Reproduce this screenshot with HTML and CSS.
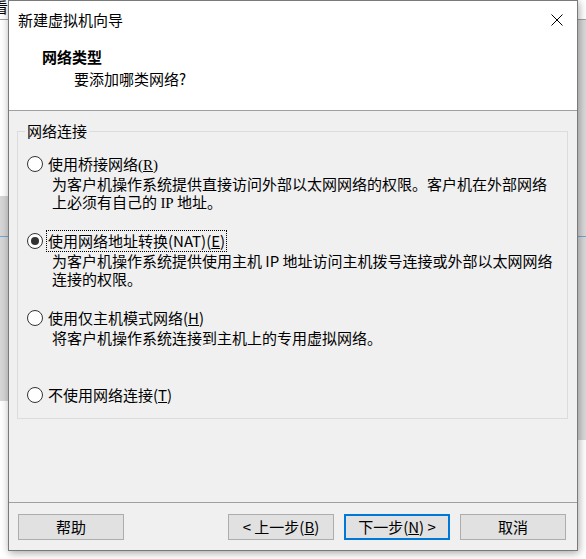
FILE: index.html
```html
<!DOCTYPE html>
<html lang="zh-CN">
<head>
<meta charset="utf-8">
<title>新建虚拟机向导</title>
<link rel="stylesheet" href="styles.css">
</head>
<body>
<div class="desktop">
  <div class="backdrop">
    <span class="bg-char">看</span>
    <div class="bg-line bg-line-top"></div>
    <div class="bg-band-left"></div>
    <div class="bg-band-right"></div>
    <div class="bg-blue"></div>
  </div>

  <div class="dialog">
    <div class="titlebar">
      <span class="title">新建虚拟机向导</span>
      <svg class="close" width="12" height="12" viewBox="0 0 12 12" aria-hidden="true">
        <path d="M0.5 0.5 L11.5 11.5 M11.5 0.5 L0.5 11.5" stroke="#000" stroke-width="1" fill="none"/>
      </svg>
    </div>

    <div class="header">
      <div class="h-title">网络类型</div>
      <div class="h-sub">要添加哪类网络?</div>
    </div>

    <div class="body">
      <fieldset class="group">
        <legend class="group-label">网络连接</legend>

        <div class="option">
          <div class="opt-row"><span class="radio"></span><span class="opt-label">使用桥接网络<span class="serif">(<u>R</u>)</span></span></div>
          <div class="opt-desc">为客户机操作系统提供直接访问外部以太网网络的权限。客户机在外部网络<br>上必须有自己的 <span class="serif">IP</span> 地址。</div>
        </div>

        <div class="option">
          <div class="opt-row"><span class="radio checked"></span><span class="opt-label focused">使用网络地址转换(NAT)(<u>E</u>)</span></div>
          <div class="opt-desc">为客户机操作系统提供使用主机 IP 地址访问主机拨号连接或外部以太网网络<br>连接的权限。</div>
        </div>

        <div class="option">
          <div class="opt-row"><span class="radio"></span><span class="opt-label">使用仅主机模式网络(<u>H</u>)</span></div>
          <div class="opt-desc">将客户机操作系统连接到主机上的专用虚拟网络。</div>
        </div>

        <div class="option">
          <div class="opt-row"><span class="radio"></span><span class="opt-label">不使用网络连接(<u>T</u>)</span></div>
        </div>
      </fieldset>
    </div>

    <div class="footer">
      <button class="btn">帮助</button>
      <div class="spacer"></div>
      <button class="btn">&lt; 上一步(<u>B</u>)</button>
      <button class="btn btn-default">下一步(<u>N</u>) &gt;</button>
      <button class="btn">取消</button>
    </div>
  </div>
</div>
</body>
</html>
```

FILE: styles.css
```css
* { box-sizing: border-box; }

html, body {
  margin: 0;
  padding: 0;
  width: 586px;
  height: 559px;
  overflow: hidden;
  background: #ffffff;
  font-family: "Noto Sans CJK SC", "Microsoft YaHei", sans-serif;
  font-size: 15px;
  color: #000;
}

.desktop {
  position: relative;
  width: 586px;
  height: 559px;
}

/* underlying application window, mostly hidden behind the dialog */
.backdrop {
  position: absolute;
  inset: 0;
  background: #ffffff;
}
.bg-char {
  position: absolute;
  left: -7px;
  top: -3px;
  font-size: 15px;
  line-height: 20px;
}
.bg-line-top {
  position: absolute;
  left: 0;
  right: 0;
  top: 19px;
  height: 1px;
  background: #a0a0a0;
}
.bg-band-left {
  position: absolute;
  left: 0;
  width: 20px;
  top: 196px;
  height: 205px;
  background: #d6d6d6;
}
.bg-band-right {
  position: absolute;
  right: 0;
  width: 20px;
  top: 20px;
  height: 420px;
  background: #d9d9d9;
}
.bg-blue {
  position: absolute;
  left: 0;
  right: 0;
  top: 236px;
  height: 1px;
  background: #6fa8dc;
}

/* dialog window */
.dialog {
  position: absolute;
  left: 8px;
  top: 0;
  width: 570px;
  height: 551px;
  border: 1px solid #7a7a7a;
  background: #f0f0f0;
  box-shadow: 1px 2px 8px rgba(0, 0, 0, 0.35);
  display: flex;
  flex-direction: column;
}

.titlebar {
  height: 37px;
  background: #ffffff;
  display: flex;
  align-items: center;
  justify-content: space-between;
  padding: 0 14px 0 9px;
}
.title {
  line-height: 20px;
}
.close {
  display: block;
  margin-top: 1px;
}

.header {
  height: 72px;
  background: #ffffff;
  padding: 9px 0 0 33px;
}
.h-title {
  font-weight: bold;
  line-height: 20px;
}
.h-sub {
  line-height: 20px;
  margin-top: 2px;
  padding-left: 32px;
}

.body {
  flex: 1;
  border-top: 1px solid #a0a0a0;
  padding: 11px 9px 0 8px;
}

.group {
  margin: 0;
  border: 1px solid #dcdcdc;
  padding: 13px 8px 12px 7px;
  min-width: 0;
}
.group-label {
  padding: 0 2px;
  line-height: 18px;
}

.option {
  min-height: 77px;
  padding-left: 2px;
}
.option:last-child {
  min-height: 0;
}

.opt-row {
  height: 22px;
  display: flex;
  align-items: center;
}
.radio {
  width: 16px;
  height: 16px;
  border: 1px solid #333333;
  border-radius: 50%;
  background: #ffffff;
  margin-right: 4px;
  display: flex;
  align-items: center;
  justify-content: center;
  flex: none;
}
.radio.checked::after {
  content: "";
  width: 8px;
  height: 8px;
  border-radius: 50%;
  background: #333333;
}
.opt-label {
  line-height: 20px;
  padding: 0 1px;
}
.opt-label.focused {
  outline: 1px dotted #000;
  outline-offset: 0;
}
.opt-desc {
  line-height: 18px;
  padding-left: 25px;
}
.serif {
  font-family: "Liberation Serif", serif;
}

.footer {
  border-top: 1px solid #a0a0a0;
  padding: 11px 11px 10px 9px;
  display: flex;
  gap: 10px;
}
.spacer {
  flex: 1;
}
.btn {
  width: 106px;
  height: 26px;
  margin: 0;
  padding: 0;
  background: #e1e1e1;
  border: 1px solid #adadad;
  border-radius: 0;
  font-family: "Noto Sans CJK SC", "Microsoft YaHei", sans-serif;
  font-size: 15px;
  line-height: 20px;
  color: #000;
}
.btn-default {
  border: 2px solid #0078d7;
}
```
